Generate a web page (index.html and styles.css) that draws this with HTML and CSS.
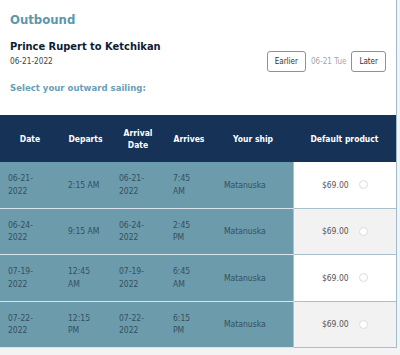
FILE: index.html
```
<!DOCTYPE html>
<html>
<head>
<meta charset="utf-8">
<link rel="stylesheet" href="styles.css">
</head>
<body>
<div class="panel">
  <div class="top">
    <h2 class="title">Outbound</h2>
    <div class="route-row">
      <div class="route">
        <div class="route-name">Prince Rupert to Ketchikan</div>
        <div class="route-date">06-21-2022</div>
      </div>
      <div class="nav">
        <button class="btn">Earlier</button>
        <span class="nav-date">06-21 Tue</span>
        <button class="btn">Later</button>
      </div>
    </div>
    <div class="select">Select your outward sailing:</div>
  </div>
  <table class="sailings">
    <colgroup>
      <col class="c-date"><col class="c-dep"><col class="c-adate"><col class="c-arr"><col class="c-ship"><col class="c-prod">
    </colgroup>
    <thead>
      <tr>
        <th>Date</th><th>Departs</th><th>Arrival<br>Date</th><th>Arrives</th><th>Your ship</th><th>Default product</th>
      </tr>
    </thead>
    <tbody>
      <tr>
        <td>06-21-<br>2022</td><td>2:15 AM</td><td>06-21-<br>2022</td><td>7:45<br>AM</td><td class="ship">Matanuska</td>
        <td class="prod"><span class="price">$69.00</span><span class="radio"></span></td>
      </tr>
      <tr class="alt">
        <td>06-24-<br>2022</td><td>9:15 AM</td><td>06-24-<br>2022</td><td>2:45<br>PM</td><td class="ship">Matanuska</td>
        <td class="prod"><span class="price">$69.00</span><span class="radio"></span></td>
      </tr>
      <tr>
        <td>07-19-<br>2022</td><td>12:45<br>AM</td><td>07-19-<br>2022</td><td>6:45<br>AM</td><td class="ship">Matanuska</td>
        <td class="prod"><span class="price">$69.00</span><span class="radio"></span></td>
      </tr>
      <tr class="alt">
        <td>07-22-<br>2022</td><td>12:15<br>PM</td><td>07-22-<br>2022</td><td>6:15<br>PM</td><td class="ship">Matanuska</td>
        <td class="prod"><span class="price">$69.00</span><span class="radio"></span></td>
      </tr>
    </tbody>
  </table>
</div>
</body>
</html>
```
FILE: styles.css
```
html, body {
  margin: 0;
  padding: 0;
  background: #f3f3f3;
}
body {
  font-family: "DejaVu Sans", Verdana, sans-serif;
  font-stretch: condensed;
}
.panel {
  width: 396px;
  background: #ffffff;
  border-right: 1px solid #9fbccb;
}
.top {
  padding: 12px 10px 0 10px;
  height: 115px;
  box-sizing: border-box;
}
.title {
  margin: 0;
  font-size: 13px;
  line-height: 16px;
  font-weight: bold;
  color: #5d97ad;
}
.route-row {
  display: flex;
  justify-content: space-between;
  margin-top: 12px;
}
.route-name {
  font-size: 11px;
  line-height: 14px;
  font-weight: bold;
  color: #0e1c33;
}
.route-date {
  margin-top: 2px;
  font-size: 8.2px;
  line-height: 11px;
  color: #444;
}
.nav {
  display: flex;
  align-items: center;
  gap: 5px;
  margin-top: 11px;
  height: 21px;
}
.btn {
  font-family: inherit;
  font-stretch: condensed;
  font-size: 8px;
  color: #333;
  background: #fff;
  border: 1px solid #8d9199;
  border-radius: 3px;
  height: 21px;
  padding: 0 7px;
  margin: 0;
}
.nav-date {
  font-size: 8px;
  color: #a5a5a5;
}
.select {
  margin-top: 10px;
  font-size: 9.5px;
  line-height: 12px;
  font-weight: bold;
  color: #6aa0b6;
}
.sailings {
  width: 396px;
  border-collapse: collapse;
  table-layout: fixed;
}
.c-date { width: 60px; }
.c-dep { width: 51px; }
.c-adate { width: 54px; }
.c-arr { width: 48px; }
.c-ship { width: 80px; }
.c-prod { width: 103px; }
.sailings th {
  background: #163257;
  color: #fff;
  font-size: 8.5px;
  line-height: 12px;
  font-weight: bold;
  height: 47px;
  padding: 0;
  text-align: center;
}
.sailings td {
  background: #6c9bab;
  color: #34505f;
  font-size: 8.5px;
  line-height: 12.5px;
  height: 45.5px;
  padding: 0 0 0 8px;
  border-bottom: 1px solid #d9e5ea;
  vertical-align: middle;
  text-align: left;
}
.sailings td.ship {
  padding-left: 11px;
}
.sailings td.prod {
  background: #ffffff;
  text-align: center;
  padding: 0;
  border-left: 1px solid #a9bfcb;
  border-bottom: 1px solid #a9bfcb;
  color: #555;
}
.sailings tr.alt td.prod {
  background: #f2f2f2;
}
.price {
  display: inline-block;
  vertical-align: middle;
}
.radio {
  display: inline-block;
  vertical-align: middle;
  width: 7px;
  height: 7px;
  margin-left: 10px;
  border: 1px solid #dcdcdc;
  border-radius: 50%;
  background: #fff;
}
```
